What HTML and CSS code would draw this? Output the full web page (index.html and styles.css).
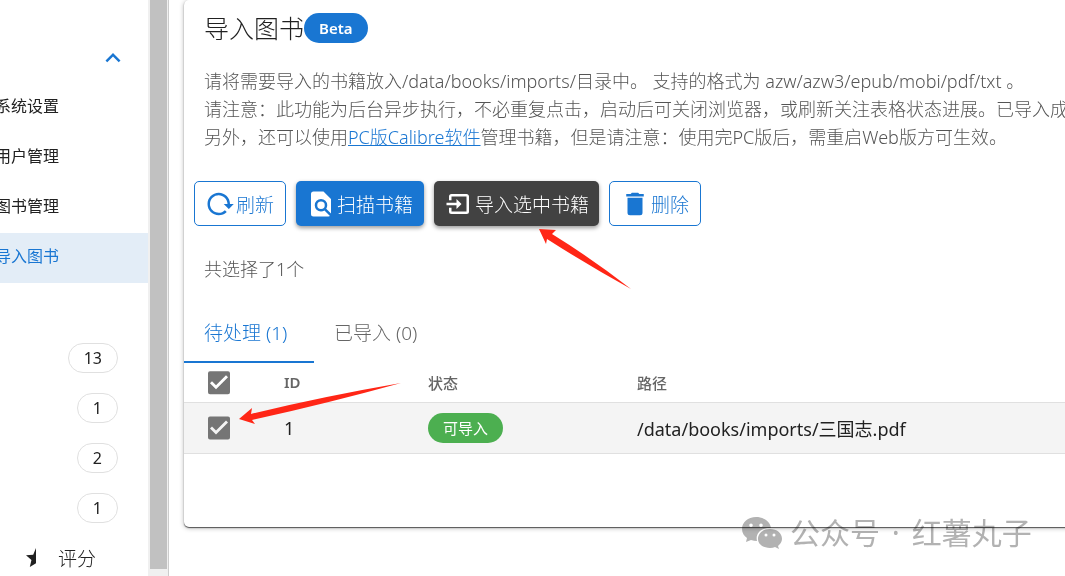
FILE: index.html
```html
<!DOCTYPE html>
<html lang="zh-CN">
<head>
<meta charset="utf-8">
<title>导入图书</title>
<link rel="stylesheet" href="styles.css">
</head>
<body>
<div class="app">
  <aside class="sidebar">
    <nav class="nav">
      <button class="nav-group" type="button" aria-label="收起">
        <svg class="chevron" viewBox="0 0 24 24"><path d="M7.41 15.41L12 10.83l4.59 4.58L18 14l-6-6-6 6z"/></svg>
      </button>
      <a class="nav-item" href="#">系统设置</a>
      <a class="nav-item" href="#">用户管理</a>
      <a class="nav-item" href="#">图书管理</a>
      <a class="nav-item active" href="#">导入图书</a>
      <div class="nav-gap"></div>
      <div class="nav-count"><span class="count">13</span></div>
      <div class="nav-count"><span class="count">1</span></div>
      <div class="nav-count"><span class="count">2</span></div>
      <div class="nav-count"><span class="count">1</span></div>
      <a class="nav-rating" href="#">
        <svg class="star" viewBox="0 0 24 24"><path d="M12 2L9.19 8.63L2 9.24L7.45 13.97L5.82 21L12 17.27z"/></svg>
        <span>评分</span>
      </a>
    </nav>
    <div class="scrollbar"><div class="thumb"></div></div>
  </aside>

  <main class="main">
    <section class="card">
      <h1 class="title">导入图书<span class="chip beta">Beta</span></h1>
      <p class="intro">请将需要导入的书籍放入/data/books/imports/目录中。 支持的格式为 azw/azw3/epub/mobi/pdf/txt 。<br>
        请注意：此功能为后台异步执行，不必重复点击，启动后可关闭浏览器，或刷新关注表格状态进展。已导入成功<br>
        另外，还可以使用<a href="#">PC版Calibre软件</a>管理书籍，但是请注意：使用完PC版后，需重启Web版方可生效。</p>

      <div class="actions">
        <button class="btn outlined" type="button"><svg viewBox="0 0 24 24"><path d="M2 12C2 16.97 6.03 21 11 21C13.39 21 15.68 20.06 17.4 18.4L15.9 16.9C14.63 18.25 12.86 19 11 19C4.76 19 1.64 11.46 6.05 7.05C10.46 2.64 18 5.77 18 12H15L19 16H19.1L23 12H20C20 7.03 15.97 3 11 3C6.03 3 2 7.03 2 12Z"/></svg>刷新</button>
        <button class="btn primary" type="button"><svg viewBox="0 0 24 24"><path d="M9 13A3 3 0 0 0 12 16A3 3 0 0 0 15 13A3 3 0 0 0 12 10A3 3 0 0 0 9 13M20 19.59V8L14 2H6A2 2 0 0 0 4 4V20A2 2 0 0 0 6 22H18C18.45 22 18.85 21.85 19.19 21.6L14.76 17.17C13.96 17.69 13 18 12 18A5 5 0 0 1 7 13A5 5 0 0 1 12 8A5 5 0 0 1 17 13C17 14 16.69 14.96 16.17 15.76L20 19.59Z"/></svg>扫描书籍</button>
        <button class="btn dark" type="button"><svg viewBox="0 0 24 24"><path d="M14 12L10 8V11H2V13H10V16M20 18V6C20 4.89 19.1 4 18 4H6A2 2 0 0 0 4 6V9H6V6H18V18H6V15H4V18A2 2 0 0 0 6 20H18A2 2 0 0 0 20 18Z"/></svg>导入选中书籍</button>
        <button class="btn outlined" type="button"><svg viewBox="0 0 24 24"><path d="M19 4H15.5L14.5 3H9.5L8.5 4H5V6H19M6 19A2 2 0 0 0 8 21H16A2 2 0 0 0 18 19V7H6V19Z"/></svg>删除</button>
      </div>

      <p class="selected">共选择了1个</p>

      <div class="tabs" role="tablist">
        <button class="tab current" type="button" role="tab" aria-selected="true">待处理 (1)</button>
        <button class="tab" type="button" role="tab" aria-selected="false">已导入 (0)</button>
      </div>

      <table class="books">
        <thead>
          <tr>
            <th class="col-check"><input class="check" type="checkbox" aria-label="全选" checked></th>
            <th class="col-id">ID</th>
            <th class="col-state">状态</th>
            <th>路径</th>
          </tr>
        </thead>
        <tbody>
          <tr>
            <td><input class="check" type="checkbox" aria-label="选择第1行" checked></td>
            <td>1</td>
            <td><span class="chip ready">可导入</span></td>
            <td>/data/books/imports/三国志.pdf</td>
          </tr>
        </tbody>
      </table>
    </section>
  </main>

  <svg class="arrow arrow-button" viewBox="0 0 100 70"><path d="M8 9L25 10L21 14Q60 38 100 69Q55 44 16 19L15 24Z"/></svg>
  <svg class="arrow arrow-row" viewBox="0 0 170 50"><path d="M9 39L22 28L21 34Q90 17 171 3Q95 24 22 40L25 44Z"/></svg>

  <div class="watermark">
    <svg viewBox="0 0 42 34"><path fill-rule="evenodd" d="M15 1C7 1 1 6 1 13C1 17 3 20 6 22L5 26L10 24Q13 25 16 25C14 17 21 11 30 12C29 5 22 1 15 1ZM10 7.500a1.800 1.800 0 1 1 0 3.600a1.800 1.800 0 1 1 0-3.600ZM20 7.500a1.800 1.800 0 1 1 0 3.600a1.800 1.800 0 1 1 0-3.600ZM29 13C22 13 17 17 17 23C17 28 22 32 29 32Q32 32 34 31L38 33L37 30C39 28 41 26 41 23C41 17 36 13 29 13ZM25 17.500a1.500 1.500 0 1 1 0 3a1.500 1.500 0 1 1 0-3ZM33 17.500a1.500 1.500 0 1 1 0 3a1.500 1.500 0 1 1 0-3Z"/></svg>
    <span>公众号 <span class="dot">·</span> 红薯丸子</span>
  </div>
</div>
</body>
</html>
```
FILE: styles.css
```css
* { box-sizing: border-box; }

body {
  margin: 0;
  background: #fff;
  color: #212121;
  font-family: "Noto Sans", "Noto Sans CJK SC", sans-serif;
  font-size: 18px;
  font-weight: 300;
  overflow: hidden;
}

.app {
  position: relative;
  display: flex;
  height: 100vh;
  overflow: hidden;
}

button {
  border: 0;
  background: none;
  padding: 0;
  font: inherit;
  color: inherit;
  cursor: pointer;
}

/* Sidebar */
.sidebar {
  display: flex;
  flex: none;
  width: 169px;
  border-right: 1px solid #ccc;
}

.nav {
  flex: 1;
  padding-top: 33px;
}

.nav > * {
  display: flex;
  align-items: center;
  width: 100%;
  height: 50px;
}

.nav-group {
  justify-content: flex-end;
  padding-right: 20px;
}

.chevron {
  width: 30px;
  height: 30px;
  fill: #1976d2;
}

.nav-item {
  padding-bottom: 6px;
  margin-left: -5px;
  font-size: 16px;
  font-weight: 400;
  color: #212121;
  text-decoration: none;
  white-space: nowrap;
}

.nav .nav-item { width: auto; }

.nav-item.active {
  background: #e3edf7;
  color: #1976d2;
}

.nav-count {
  justify-content: flex-end;
  padding-right: 30px;
}

.count {
  padding: 0 15px;
  border: 1px solid #e0e0e0;
  border-radius: 15px;
  font-size: 16px;
  font-weight: 400;
  line-height: 28px;
}

.nav-rating {
  gap: 10px;
  padding-left: 24px;
  font-size: 19px;
  color: #212121;
  text-decoration: none;
}

.star {
  width: 24px;
  height: 24px;
  fill: #212121;
}

.scrollbar {
  width: 20px;
  padding: 0 1px 7px 2px;
  background: #f0f0f0;
}

.thumb {
  height: 100%;
  background: #c1c1c1;
}

/* Main card */
.main {
  flex: 1;
  min-width: 0;
  padding-left: 15px;
}

.card {
  width: calc(100% + 40px);
  padding-bottom: 73px;
  border-radius: 5px;
  background: #fff;
  box-shadow: 0 1px 1px #555, 0 1px 5px rgba(0, 0, 0, .3);
}

.title {
  display: flex;
  align-items: center;
  margin: 0;
  padding: 10px 20px 0;
  font-size: 25px;
  font-weight: 300;
  line-height: 36px;
}

.chip {
  display: inline-block;
  padding: 0 15px;
  border-radius: 15px;
  color: #fff;
  font-size: 15px;
  font-weight: 400;
  line-height: 30px;
}

.beta {
  background: #1976d2;
  font-weight: 600;
}

.ready {
  background: #4caf50;
  vertical-align: middle;
}

.intro {
  margin: 0;
  padding: 21px 20px 0;
  color: #555;
  line-height: 28px;
  white-space: nowrap;
}

.intro a { color: #1976d2; }

.actions {
  display: flex;
  gap: 10px;
  padding: 30px 10px 0;
}

.btn {
  display: flex;
  align-items: center;
  gap: 1px;
  height: 45px;
  padding: 0 10px;
  border-radius: 5px;
  font-size: 19px;
  white-space: nowrap;
}

.btn svg {
  width: 30px;
  height: 30px;
  fill: currentColor;
}

.outlined {
  padding: 0 11px 0 10px;
  border: 1px solid #1976d2;
  color: #1976d2;
}

.primary,
.dark {
  color: #fff;
  box-shadow: 0 2px 4px rgba(0, 0, 0, .4);
}

.primary {
  padding-right: 11px;
  background: #1976d2;
}

.dark { background: #424242; }

.selected {
  margin: 0;
  padding: 30px 20px 20px;
  color: #555;
  line-height: 27px;
}

.tabs { display: flex; }

.tab {
  height: 60px;
  min-width: 130px;
  padding: 0 20px;
  border-bottom: 2px solid transparent;
  color: #666;
  font-size: 19px;
  text-align: left;
}

.tab.current {
  border-color: #1976d2;
  color: #1976d2;
}

/* Table */
.books {
  width: 100%;
  border-collapse: collapse;
  table-layout: fixed;
}

.books th,
.books td {
  padding: 0 0 0 20px;
  border-bottom: 1px solid #e0e0e0;
  text-align: left;
}

.books th {
  height: 39px;
  color: #666;
  font-size: 15px;
  font-weight: 500;
}

.books .col-id { font-weight: 600; }

.books td {
  height: 51px;
  background: #f4f4f4;
  font-weight: 400;
}

.col-check { width: 80px; }
.col-id { width: 144px; }
.col-state { width: 209px; }

.check {
  display: block;
  appearance: none;
  width: 30px;
  height: 30px;
  margin: 0;
  background: #757575;
  clip-path: path("M6 4H24Q26 4 26 6V25Q26 27 24 27H6Q4 27 4 25V6Q4 4 6 4ZM6 16L12 22L24 10L22 8L12 18L8 14Z");
}

/* Annotations */
.arrow {
  position: absolute;
  fill: #ff2616;
}

.arrow-button {
  left: 531px;
  top: 220px;
  width: 100px;
  height: 70px;
}

.arrow-row {
  left: 230px;
  top: 380px;
  width: 170px;
  height: 50px;
  overflow: visible;
}

.watermark {
  position: absolute;
  left: 741px;
  top: 512px;
  display: flex;
  align-items: center;
  gap: 7px;
  color: #b2b2b2;
  font-size: 30px;
  font-weight: 400;
  line-height: 42px;
  mix-blend-mode: multiply;
}

.dot { padding: 0 4px; }

.watermark svg {
  width: 42px;
  height: 34px;
  fill: currentColor;
}
```
